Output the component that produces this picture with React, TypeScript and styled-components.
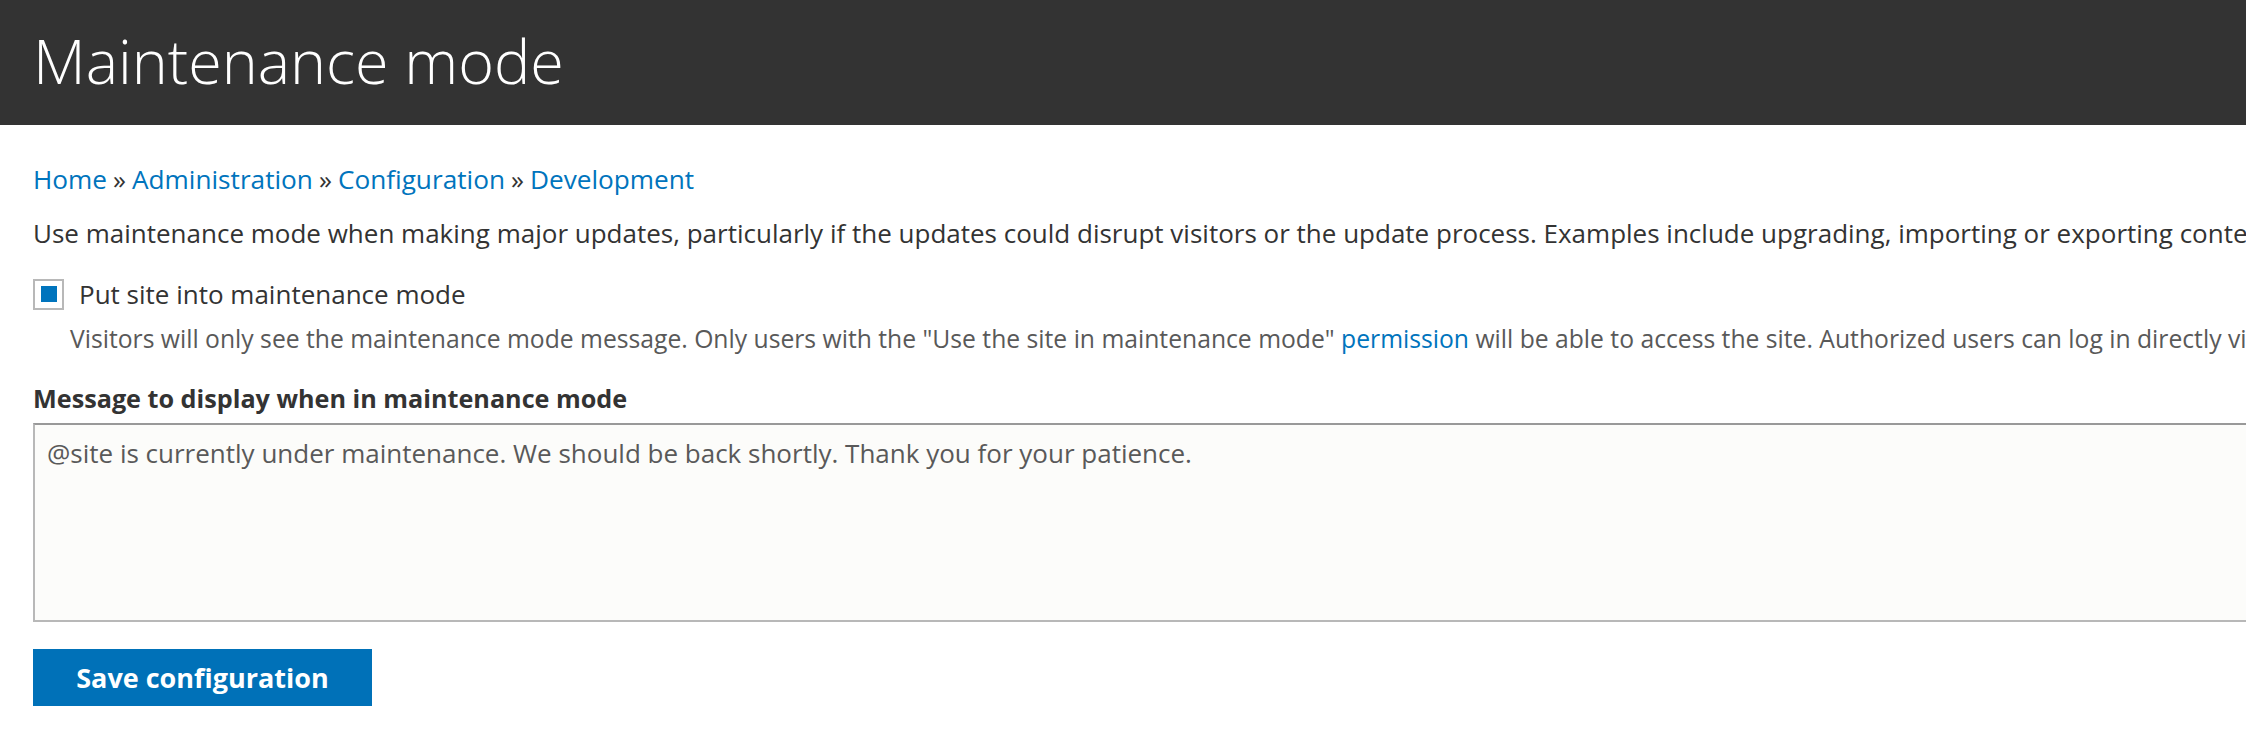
import React from "react";
import styled, { createGlobalStyle } from "styled-components";

const GlobalStyle = createGlobalStyle`
  html, body {
    margin: 0;
    padding: 0;
    background: #ffffff;
    overflow: hidden;
  }
  body {
    font-family: "Open Sans", "Noto Sans", "DejaVu Sans", sans-serif;
    font-size: 26px;
    line-height: 40px;
    color: #333333;
  }
`;

const Page = styled.div`
  width: 2700px;
`;

const Header = styled.header`
  background: #333333;
  height: 125px;
  display: flex;
  align-items: center;
  padding: 0 33px;
  box-sizing: border-box;
`;

const Title = styled.h1`
  margin: 0 0 4px;
  color: #ffffff;
  font-weight: 300;
  font-size: 61px;
  line-height: 1;
`;

const Main = styled.main`
  padding: 34px 33px 0;
  display: flex;
  flex-direction: column;
`;

const Breadcrumb = styled.nav`
  white-space: nowrap;
  color: #333333;
  font-size: 26.2px;
`;

const Link = styled.a`
  color: #0074bd;
  text-decoration: none;
`;

const Sep = styled.span`
  padding: 0 6px;
`;

const Intro = styled.p`
  margin: 14px 0 0;
  white-space: nowrap;
`;

const CheckRow = styled.label`
  display: flex;
  align-items: center;
  gap: 15px;
  margin-top: 21px;
  white-space: nowrap;
`;

const Box = styled.span`
  width: 31px;
  height: 31px;
  box-sizing: border-box;
  border: 2px solid #b8b8b8;
  display: flex;
  align-items: center;
  justify-content: center;
  background: #ffffff;
`;

const Tick = styled.span`
  width: 16px;
  height: 16px;
  background: #0074bd;
`;

const Help = styled.div`
  margin: 5px 0 0 37px;
  color: #595959;
  font-size: 24.7px;
  white-space: nowrap;
`;

const FieldLabel = styled.div`
  margin-top: 19px;
  font-weight: 700;
  font-size: 25.2px;
  white-space: nowrap;
`;

const TextArea = styled.div`
  margin-top: 5px;
  height: 199px;
  box-sizing: border-box;
  border: 2px solid #b8b8b8;
  border-top-color: #999999;
  background: #fcfcfa;
  padding: 8px 12px;
  color: #595959;
  white-space: nowrap;
`;

const Button = styled.button`
  margin-top: 27px;
  align-self: flex-start;
  width: 339px;
  height: 57px;
  border: 0;
  background: #0071b8;
  color: #ffffff;
  font-family: inherit;
  font-size: 27px;
  font-weight: 700;
  padding: 0;
`;

export default function App() {
  return (
    <>
      <GlobalStyle />
      <Page>
        <Header>
          <Title>Maintenance mode</Title>
        </Header>
        <Main>
          <Breadcrumb>
            <Link href="#">Home</Link>
            <Sep>»</Sep>
            <Link href="#">Administration</Link>
            <Sep>»</Sep>
            <Link href="#">Configuration</Link>
            <Sep>»</Sep>
            <Link href="#">Development</Link>
          </Breadcrumb>
          <Intro>
            Use maintenance mode when making major updates, particularly if the updates could disrupt visitors or the update process. Examples include upgrading, importing or exporting content, modifying a theme, modifying content types, and making backups.
          </Intro>
          <CheckRow>
            <Box>
              <Tick />
            </Box>
            Put site into maintenance mode
          </CheckRow>
          <Help>
            Visitors will only see the maintenance mode message. Only users with the "Use the site in maintenance mode"{" "}
            <Link href="#">permission</Link> will be able to access the site. Authorized users can log in directly via the user login page.
          </Help>
          <FieldLabel>Message to display when in maintenance mode</FieldLabel>
          <TextArea>@site is currently under maintenance. We should be back shortly. Thank you for your patience.</TextArea>
          <Button type="button">Save configuration</Button>
        </Main>
      </Page>
    </>
  );
}
